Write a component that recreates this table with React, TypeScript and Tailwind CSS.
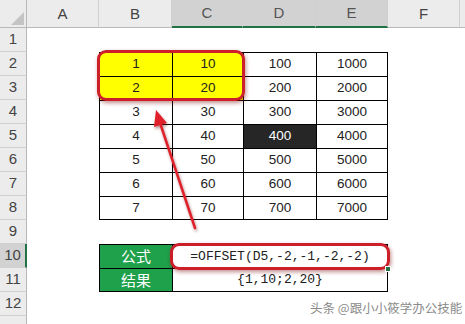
import React from 'react';

const colW = [72, 73, 71, 73, 72, 72];
const letters = ['A', 'B', 'C', 'D', 'E', 'F'];

const data = [
  [1, 10, 100, 1000],
  [2, 20, 200, 2000],
  [3, 30, 300, 3000],
  [4, 40, 400, 4000],
  [5, 50, 500, 5000],
  [6, 60, 600, 6000],
  [7, 70, 700, 7000],
];

function RowHead({ n, active }: { n?: number; active?: boolean }) {
  return (
    <div
      className={
        'w-[27px] shrink-0 h-full flex items-center justify-center border-b border-[#d0d0d0] text-[15px] text-[#444] ' +
        (active ? 'bg-[#d2d2d2] border-r-2 border-r-[#217346]' : 'bg-[#ececec] border-r border-r-[#b8b8b8]')
      }
    >
      {n}
    </div>
  );
}

export default function App() {
  const sans = { fontFamily: '"Liberation Sans", Arial, sans-serif' };
  return (
    <div className="relative w-[465px] h-[324px] overflow-hidden bg-white" style={sans}>
      {/* column headers */}
      <div className="flex h-[28px]">
        <div className="relative w-[27px] shrink-0 bg-[#ececec] border-r border-b border-[#b8b8b8]">
          <div className="absolute right-[2px] bottom-[2px] w-0 h-0 border-l-[13px] border-l-transparent border-b-[13px] border-b-[#c4c4c4]" />
        </div>
        {letters.map((l, i) => {
          const sel = i >= 2 && i <= 4;
          return (
            <div
              key={l}
              style={{ width: colW[i] }}
              className={
                'shrink-0 flex items-end justify-center pb-[2px] text-[15px] border-r border-[#d0d0d0] ' +
                (sel
                  ? 'bg-[#d2d2d2] text-[#555] border-b-2 border-b-[#217346]'
                  : 'bg-[#ececec] text-[#444] border-b border-b-[#b8b8b8]')
              }
            >
              {l}
            </div>
          );
        })}
        <div className="flex-1 bg-[#ececec] border-b border-[#b8b8b8]" />
      </div>

      {/* row 1 */}
      <div className="flex h-[24px]">
        <RowHead n={1} />
      </div>

      {/* rows 2-8 */}
      {data.map((row, r) => (
        <div key={r} className="flex h-[24px]">
          <RowHead n={r + 2} />
          <div className="w-[72px] shrink-0" />
          {row.map((v, c) => {
            const yellow = r < 2 && c < 2;
            const dark = r === 3 && c === 2;
            return (
              <div
                key={c}
                style={{ width: colW[c + 1] }}
                className={
                  'shrink-0 flex items-center justify-center text-[13.5px] border-l border-t border-black ' +
                  (c === 3 ? 'border-r ' : '') +
                  (r === 6 ? 'border-b ' : '') +
                  (yellow ? 'bg-[#ffff00] text-[#222]' : dark ? 'bg-[#262626] text-white' : 'text-[#222]')
                }
              >
                {v}
              </div>
            );
          })}
        </div>
      ))}

      {/* row 9 */}
      <div className="flex h-[24px]">
        <RowHead n={9} />
      </div>

      {/* row 10 */}
      <div className="flex h-[24px]">
        <RowHead n={10} active />
        <div className="w-[72px] shrink-0" />
        <div
          className="w-[73px] shrink-0 flex items-center justify-center bg-[#1fa04b] text-white text-[15px] border-l border-t border-black"
          style={{ fontFamily: '"Noto Sans CJK SC", sans-serif' }}
        >
          公式
        </div>
        <div
          className="w-[216px] shrink-0 flex items-center justify-center text-[13px] text-[#222] border-l border-t border-r border-black"
          style={{ fontFamily: '"Liberation Mono", monospace' }}
        >
          =OFFSET(D5,-2,-1,-2,-2)
        </div>
      </div>

      {/* row 11 */}
      <div className="flex h-[24px]">
        <RowHead n={11} />
        <div className="w-[72px] shrink-0" />
        <div
          className="w-[73px] shrink-0 flex items-center justify-center bg-[#1fa04b] text-white text-[15px] border-l border-t border-b border-black"
          style={{ fontFamily: '"Noto Sans CJK SC", sans-serif' }}
        >
          结果
        </div>
        <div
          className="w-[216px] shrink-0 flex items-center justify-center text-[13px] text-[#222] border border-black"
          style={{ fontFamily: '"Liberation Mono", monospace' }}
        >
          {'{1,10;2,20}'}
        </div>
      </div>

      {/* row 12-13 */}
      <div className="flex h-[24px]">
        <RowHead n={12} />
      </div>
      <div className="flex h-[24px]">
        <RowHead />
      </div>

      {/* red highlight boxes */}
      <div className="absolute left-[97px] top-[50px] w-[148px] h-[51px] rounded-[9px] border-[3px] border-[#cc1f2a] shadow-[1px_2px_4px_rgba(120,0,0,0.45)]" />
      <div className="absolute left-[170px] top-[243px] w-[220px] h-[27px] rounded-[9px] border-[3px] border-[#cc1f2a] shadow-[1px_2px_4px_rgba(120,0,0,0.45)]" />

      {/* fill handle */}
      <div className="absolute left-[385px] top-[266px] w-[6px] h-[6px] bg-[#217346] border border-white" />

      {/* arrow */}
      <svg className="absolute left-0 top-0" width="465" height="324" style={{ filter: 'drop-shadow(1px 2px 1.5px rgba(100,0,0,0.45))' }}>
        <line x1="195" y1="228" x2="160.4" y2="124" stroke="#e0202a" strokeWidth="2.5" strokeLinecap="round" />
        <polygon points="156,110 167,123 154,127" fill="#e0202a" />
      </svg>

      {/* watermark */}
      <div
        className="absolute left-[310px] top-[300px] whitespace-nowrap text-[12.5px] leading-[16px] text-[#8a8a8a]"
        style={{ fontFamily: '"Noto Sans CJK SC", sans-serif', textShadow: '0 0 2px #fff, 0 0 2px #fff' }}
      >
        头条 @跟小小筱学办公技能
      </div>
    </div>
  );
}
